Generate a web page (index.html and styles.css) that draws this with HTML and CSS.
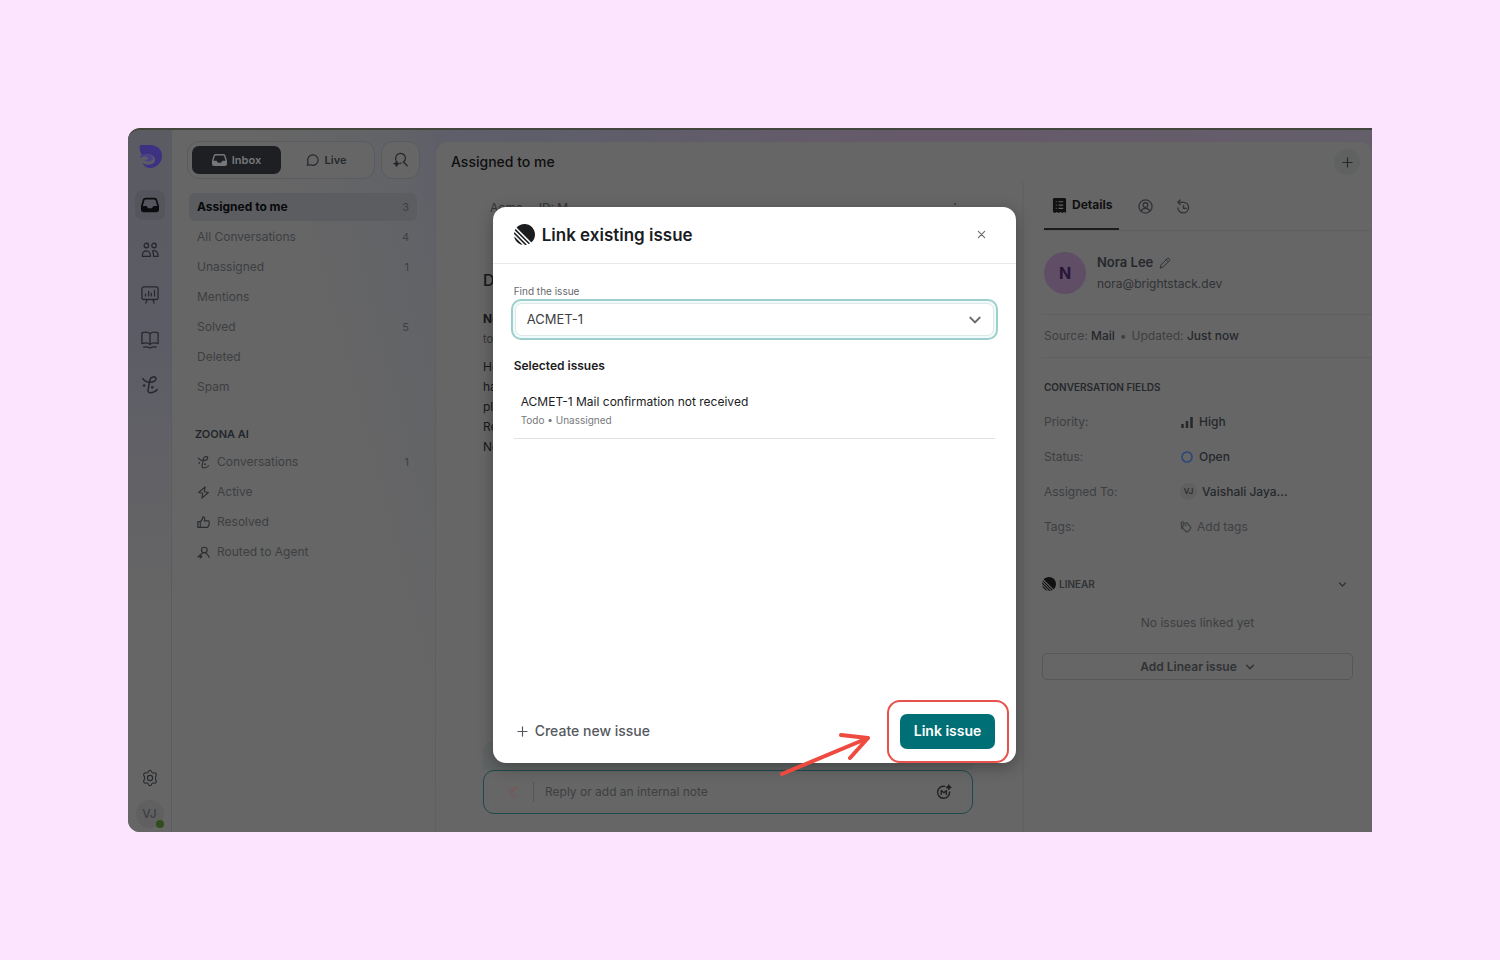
FILE: index.html
```html
<!DOCTYPE html>
<html lang="en">
<head>
    <meta charset="UTF-8">
    <meta name="viewport" content="width=device-width, initial-scale=1.0">
    <title>Link existing issue</title>
    <link rel="stylesheet" href="styles.css">
</head>
<body>
    <!-- shared icon shapes -->
    <svg class="sprite" aria-hidden="true">
        <symbol id="i-inbox" viewBox="0 0 20 16">
            <path fill="currentColor" fill-rule="evenodd" d="M5 0h10c1.500 0 2.500.8 2.900 2L20 9v4c0 2-1 3-3 3H3c-2 0-3-1-3-3V9l2.100-7C2.500.8 3.500 0 5 0zM5 2c-.6 0-1 .3-1.200.9L2 9h4l2 2.500h4L14 9h4l-1.800-6.100C16 2.300 15.600 2 15 2z"/>
        </symbol>
        <symbol id="i-zoona" viewBox="0 0 20 20">
            <g fill="none" stroke="currentColor" stroke-width="1.700" stroke-linecap="round" stroke-linejoin="round">
                <path d="M2 3c2 3 5 4 8 4 4 0 7-2 6.500-4.500S11 .5 10 4L8 14.500c-.5 2.500 0 4 2 4 3 0 6-1 8-3.500"/>
            </g>
            <circle cx="3.500" cy="10.500" r="1.400" fill="currentColor"/>
            <circle cx="12.500" cy="12.500" r="1.400" fill="currentColor"/>
        </symbol>
        <symbol id="i-linear" viewBox="0 0 100 100">
            <path fill="currentColor" d="M1.200 61.500c-.2-1 1-1.600 1.700-.9l36.500 36.500c.7.700.1 1.900-.9 1.700C20 94.400 5.600 80 1.200 61.500zM0 46.900c0 .3.100.5.300.700l52.100 52.100c.2.200.4.300.7.300 2.400-.1 4.700-.5 7-1 .8-.2 1-1.100.5-1.700L2.600 39.400c-.6-.6-1.500-.3-1.700.5-.5 2.300-.8 4.600-.9 7zM4.200 29.700c-.2.400-.1.800.2 1.100l64.800 64.800c.3.300.7.400 1.100.2 1.800-.8 3.500-1.700 5.200-2.700.5-.3.600-1.100.2-1.600L8.400 24.300c-.4-.4-1.200-.3-1.600.2-1 1.700-1.900 3.400-2.600 5.200zM12.700 18.100c-.4-.4-.4-1 0-1.400C21.800 6.400 35.100 0 50 0c27.600 0 50 22.400 50 50 0 14.900-6.500 28.200-16.700 37.400-.4.400-1 .3-1.400 0z"/>
        </symbol>
        <symbol id="i-plus" viewBox="0 0 12 12">
            <path d="M6 1v10M1 6h10" fill="none" stroke="currentColor" stroke-width="1.300" stroke-linecap="round"/>
        </symbol>
        <symbol id="i-down" viewBox="0 0 12 12">
            <path d="M2 4l4 4 4-4" fill="none" stroke="currentColor" stroke-width="1.700" stroke-linecap="round" stroke-linejoin="round"/>
        </symbol>
    </svg>

    <div class="app">
        <nav class="rail" aria-label="Main">
            <svg class="logo" viewBox="0 0 28 28">
                <path fill="#3d3182" d="M4 3h10c7 0 12 4 12 11 0 6-5 12-12 12-3 0-6-2-8-5 5 3 12 2 13-2 1-5-5-8-13-6C4 10 3 7 4 3z"/>
                <path fill="#4b3f8d" d="M4 14c5-3 14-1 13 3-1 3-6 3-9 1 3 0 5-1 4-2-1-2-5-2-8 0z"/>
            </svg>
            <a href="#" class="rail-link current" aria-label="Inbox"><svg><use href="#i-inbox"/></svg></a>
            <a href="#" class="rail-link" aria-label="Contacts">
                <svg viewBox="0 0 20 18" class="line"><circle cx="6" cy="4" r="2.500"/><circle cx="14.500" cy="4" r="2.500"/><path d="M1.500 16c0-8 9-8 9 0zM13 10c4-1 6 2 6 6h-5c0-3-1-5-1-6z"/></svg>
            </a>
            <a href="#" class="rail-link" aria-label="Reports">
                <svg viewBox="0 0 20 20" class="line"><rect x="1" y="1" width="18" height="14" rx="2"/><path d="M6.500 15.500L5.500 19M13.500 15.500l1 3.500M5 11V9M8.500 11V6M11.500 11V8M15 11V5"/></svg>
            </a>
            <a href="#" class="rail-link" aria-label="Knowledge base">
                <svg viewBox="0 0 20 20" class="line"><path d="M10 3v12M10 3C8 1 4 1 1 2v12c3-1 7-1 9 1 2-2 6-2 9-1V2c-3-1-7-1-9 1M3 18c3-1 4-1 7 1 3-2 4-2 7-1"/></svg>
            </a>
            <a href="#" class="rail-link" aria-label="Zoona AI"><svg><use href="#i-zoona"/></svg></a>
            <a href="#" class="rail-link settings" aria-label="Settings">
                <svg viewBox="0 0 24 24" class="line"><circle cx="12" cy="12" r="3.500"/><path d="M10 3.500C10.500 1 13.500 1 14 3.500c.5 1.500 1.500 2 3 1.700 2.500-.7 4.500 2 3 4-1 1.300-1 4.300 0 5.600 1.500 2-.5 4.700-3 4-1.500-.3-2.500.2-3 1.700-.5 2.500-3.500 2.500-4 0-.5-1.500-1.500-2-3-1.700-2.500.7-4.500-2-3-4 1-1.300 1-4.300 0-5.600-1.500-2 .5-4.700 3-4 1.500.3 2.500-.2 3-1.700z"/></svg>
            </a>
            <div class="me">VJ<span class="online"></span></div>
        </nav>

        <aside class="sidebar">
            <div class="tools">
                <div class="switch">
                    <button class="switch-btn active"><svg><use href="#i-inbox"/></svg>Inbox</button>
                    <button class="switch-btn"><svg viewBox="0 0 16 16" class="line"><path d="M2 14l1-3.500A6 6 0 1 1 6 13.500z"/></svg>Live</button>
                </div>
                <button class="search" aria-label="Search">
                    <svg viewBox="0 0 18 18" class="line"><path d="M3 9V7a5.500 5.500 0 1 1 8.500 4.600M12 11.500L16 15.500M8 12.700h1"/><path fill="currentColor" d="M4 10l1 2.500L7 13l-2 1-1 2-1-2-2-1 2-.5z"/></svg>
                </button>
            </div>
            <ul class="folders">
                <li><a href="#" class="folder selected">Assigned to me<span>3</span></a></li>
                <li><a href="#" class="folder">All Conversations<span>4</span></a></li>
                <li><a href="#" class="folder">Unassigned<span>1</span></a></li>
                <li><a href="#" class="folder">Mentions</a></li>
                <li><a href="#" class="folder">Solved<span>5</span></a></li>
                <li><a href="#" class="folder">Deleted</a></li>
                <li><a href="#" class="folder">Spam</a></li>
            </ul>
            <h2 class="group-title">ZOONA AI</h2>
            <ul class="folders">
                <li><a href="#" class="folder"><svg><use href="#i-zoona"/></svg>Conversations<span>1</span></a></li>
                <li><a href="#" class="folder"><svg viewBox="0 0 16 16" class="line"><path d="M10 1L2 8l5 1-1 6 8-7-5-1z"/></svg>Active</a></li>
                <li><a href="#" class="folder"><svg viewBox="0 0 16 16" class="line"><path d="M1 7h3v7H1zM4 7c2-1 3-3 3-6 3 0 3 2 2 5h5c2 0 1 8-2 8H4"/></svg>Resolved</a></li>
                <li><a href="#" class="folder"><svg viewBox="0 0 16 16" class="line"><circle cx="9" cy="5" r="3.500"/><path d="M11 9c2 1 3 2 4 5M7 9c-2 1-3 1-4 3M1 13h5M4 11l2 2-2 2"/></svg>Routed to Agent</a></li>
            </ul>
        </aside>

        <main class="main">
            <header class="main-head">
                <h1>Assigned to me</h1>
                <button class="add" aria-label="New conversation"><svg><use href="#i-plus"/></svg></button>
            </header>
            <div class="columns">
                <section class="thread">
                    <div class="thread-meta"><span>Acme</span><span>ID: M</span><span class="more">⋮</span></div>
                    <h2 class="subject">De</h2>
                    <p class="from">Nora</p>
                    <p class="to">to me</p>
                    <p class="message">Hey,<br>have<br>pls<br>Re:<br>Nora</p>
                    <div class="composer">
                        <div class="composer-note"></div>
                        <div class="reply">
                            <svg class="reply-ai"><use href="#i-zoona"/></svg>
                            <input type="text" aria-label="Reply" placeholder="Reply or add an internal note">
                            <svg class="macro" viewBox="0 0 20 20">
                                <path d="M11 3a7.500 7.500 0 1 0 6 7M6.500 13V8L10 11l3-3v5" fill="none" stroke="currentColor" stroke-width="1.700" stroke-linecap="round" stroke-linejoin="round"/>
                                <path d="M16 0l1.500 2.500L20 4l-2.500 1.500L16 8l-1.500-2.500L12 4l2.500-1.500z" fill="currentColor"/>
                            </svg>
                        </div>
                    </div>
                </section>

                <aside class="details">
                    <div class="tabs">
                        <button class="tab active">
                            <svg viewBox="0 0 14 16"><path fill="#111" d="M1 0h12l1 1v15l-2-1-2 1-2-1-2 1-2-1-2 1-2-1V1z"/><path d="M3 4h1M6 4h5M3 7.500h1M6 7.500h5M3 11h1M6 11h5" stroke="#666" stroke-width="1.300"/></svg>Details
                        </button>
                        <button class="tab" aria-label="Contact"><svg viewBox="0 0 16 16" class="line"><circle cx="8" cy="8" r="7"/><circle cx="8" cy="6.500" r="2.500"/><path d="M3.500 13c1-4 8-4 9 0"/></svg></button>
                        <button class="tab" aria-label="History"><svg viewBox="0 0 16 16" class="line"><path d="M2 3.500h6.500a5.700 5.700 0 1 1-6.500 6M4.500 1L2 3.500 4.500 6M8 7v3h3"/></svg></button>
                    </div>
                    <div class="contact">
                        <div class="avatar">N</div>
                        <div>
                            <div class="name">Nora Lee <svg viewBox="0 0 14 14" class="line"><path d="M1.500 12.500l1-3.500 7-7c1.500-1.500 4 .5 2.500 2.500l-7 7zM8.500 3l2.500 2.500"/></svg></div>
                            <div class="email">nora@brightstack.dev</div>
                        </div>
                    </div>
                    <p class="source">Source: <b>Mail</b><i>•</i>Updated: <b>Just now</b></p>
                    <h3 class="fields-title">CONVERSATION FIELDS</h3>
                    <dl class="fields">
                        <dt>Priority:</dt>
                        <dd><svg viewBox="0 0 14 14"><path d="M2.500 13V9M7 13V6M11.500 13V2" stroke="currentColor" stroke-width="2.500"/></svg>High</dd>
                        <dt>Status:</dt>
                        <dd><svg viewBox="0 0 14 14"><circle cx="7" cy="7" r="5" fill="none" stroke="#2d467b" stroke-width="1.700"/></svg>Open</dd>
                        <dt>Assigned To:</dt>
                        <dd><span class="mini">VJ</span>Vaishali Jaya...</dd>
                        <dt>Tags:</dt>
                        <dd class="muted"><svg viewBox="0 0 14 14" class="line"><path d="M4 3l4-1 4 4.500c1 1 1 2 0 3L9.500 12c-1 1-2 1-3 0L3 8zM2 9L1.500 4C1 2 2 1 4 1"/><circle cx="6.500" cy="5" r=".5"/></svg>Add tags</dd>
                    </dl>
                    <section class="linear">
                        <h3 class="linear-head"><svg class="linear-mark"><use href="#i-linear"/></svg>LINEAR<svg class="chevron"><use href="#i-down"/></svg></h3>
                        <p>No issues linked yet</p>
                        <button class="add-linear">Add Linear issue<svg><use href="#i-down"/></svg></button>
                    </section>
                </aside>
            </div>
        </main>

        <div class="overlay">
            <div class="modal" role="dialog" aria-labelledby="modal-title">
                <header class="modal-head">
                    <svg class="modal-logo"><use href="#i-linear"/></svg>
                    <h2 id="modal-title">Link existing issue</h2>
                    <button class="close" aria-label="Close"><svg viewBox="0 0 10 10"><path d="M1.500 1.500l7 7M8.500 1.500l-7 7" stroke="currentColor" stroke-width="1.200" stroke-linecap="round"/></svg></button>
                </header>
                <div class="modal-body">
                    <label for="issue">Find the issue</label>
                    <div class="select">
                        <select id="issue"><option>ACMET-1</option></select>
                        <svg><use href="#i-down"/></svg>
                    </div>
                    <h3>Selected issues</h3>
                    <div class="issue">
                        <div class="issue-name">ACMET-1 Mail confirmation not received</div>
                        <div class="issue-state">Todo • Unassigned</div>
                    </div>
                </div>
                <footer class="modal-foot">
                    <button class="create"><svg><use href="#i-plus"/></svg>Create new issue</button>
                    <button class="link-issue">Link issue<span class="highlight"></span></button>
                </footer>
                <svg class="arrow" viewBox="0 0 92 46"><path d="M3 42L89 6M62 3l27 3-18 20" fill="none" stroke="#ee4a40" stroke-width="4" stroke-linecap="round" stroke-linejoin="round"/></svg>
            </div>
        </div>
    </div>
</body>
</html>
```

FILE: styles.css
```css
:root {
    --dim: #666666;
    --line: #5f5f60;
    --ink: #17181a;
    --text: #25282c;
    --muted: #3d3f42;
    --teal: #007076;
    --red: #e8524c;
}

* {
    box-sizing: border-box;
}

body {
    margin: 0;
    min-height: 100vh;
    padding: 128px;
    display: flex;
    background: #fce4ff;
    font-family: Inter, "Noto Sans", sans-serif;
    font-size: 12px;
    line-height: 20px;
    color: var(--text);
}

h1, h2, h3, p, ul, dl, dd {
    margin: 0;
    padding: 0;
}

ul {
    list-style: none;
}

a {
    color: inherit;
    text-decoration: none;
}

button, input, select {
    font: inherit;
    color: inherit;
    background: none;
    border: 0;
    padding: 0;
}

svg {
    flex: none;
}

.sprite {
    position: absolute;
    width: 0;
    height: 0;
}

.line {
    fill: none;
    stroke: currentColor;
    stroke-width: 1.4;
    stroke-linecap: round;
    stroke-linejoin: round;
}

.app {
    position: relative;
    flex: 1;
    display: grid;
    grid-template-columns: 44px 263px 1fr;
    border-top: 2px solid #42463c;
    border-radius: 12px 0 0 12px;
    background: linear-gradient(100deg, #616166 0%, #5e5e6b 30%, #66596a 60%, #63606a 100%);
    overflow: hidden;
}

/* left icon rail */
.rail {
    display: flex;
    flex-direction: column;
    align-items: center;
    gap: 15px;
    padding: 12px 0 4px;
    border-right: 1px solid #5c5c60;
    background: linear-gradient(#5b5b63 0%, #5c5c66 30%, #626266 50%, var(--dim) 70%);
}

.logo {
    width: 28px;
    height: 28px;
    margin-bottom: 5px;
}

.rail-link {
    width: 30px;
    height: 30px;
    display: grid;
    place-items: center;
    border-radius: 8px;
}

.rail-link svg {
    width: 18px;
    height: 18px;
}

.rail-link.current {
    background: #55565d;
    color: #0b0c0e;
}

.settings {
    margin-top: auto;
}

.me {
    position: relative;
    width: 28px;
    height: 28px;
    margin-top: -8px;
    border-radius: 50%;
    background: #606060;
    color: var(--muted);
    font-weight: 500;
    line-height: 28px;
    text-align: center;
}

.online {
    position: absolute;
    right: 0;
    bottom: 0;
    width: 8px;
    height: 8px;
    border-radius: 50%;
    background: #2f4e1c;
}

/* folder list */
.sidebar {
    padding: 11px 15px;
    background: linear-gradient(75deg, var(--dim) 0%, var(--dim) 60%, #626367 90%, #5f5f69 100%);
}

.tools {
    display: flex;
    gap: 6px;
    margin-bottom: 14px;
}

.switch {
    flex: 1;
    display: flex;
    padding: 4px;
    border: 1px solid #5a5b60;
    border-radius: 12px;
    background: var(--dim);
}

.switch-btn {
    flex: 1;
    display: flex;
    align-items: center;
    justify-content: center;
    gap: 5px;
    height: 28px;
    border-radius: 7px;
    font-size: 11px;
    font-weight: 600;
}

.switch-btn svg {
    width: 15px;
    height: 14px;
}

.switch-btn.active {
    background: #1d1f23;
    color: #777779;
}

.search {
    width: 39px;
    display: grid;
    place-items: center;
    border: 1px solid #5a5b60;
    border-radius: 12px;
    background: var(--dim);
}

.search svg {
    width: 16px;
    height: 16px;
}

.folders {
    display: grid;
    gap: 2px;
    padding: 0 3px 0 2px;
}

.folder {
    display: flex;
    align-items: center;
    gap: 7px;
    height: 28px;
    padding: 0 8px;
    border-radius: 6px;
    color: var(--muted);
}

.folder svg {
    width: 13px;
    height: 13px;
    color: #2b2d30;
}

.folder span {
    margin-left: auto;
    font-size: 11px;
}

.folder.selected {
    background: #5b5d60;
    color: #08090a;
    font-weight: 700;
}

.folder.selected span {
    color: var(--muted);
    font-weight: 400;
}

.group-title {
    padding: 23px 8px 4px;
    font-size: 11px;
    font-weight: 600;
    color: #22262c;
}

/* conversation panel */
.main {
    display: flex;
    flex-direction: column;
    margin-top: 12px;
    border-left: 1px solid var(--line);
    border-radius: 12px 12px 0 0;
    background: var(--dim);
}

.main-head {
    display: flex;
    align-items: center;
    justify-content: space-between;
    height: 40px;
    padding: 0 12px 0 15px;
}

.main-head h1 {
    font-size: 14px;
    font-weight: 500;
    color: #0e0f10;
}

.add {
    width: 26px;
    height: 26px;
    display: grid;
    place-items: center;
    border-radius: 50%;
    background: #606262;
}

.add svg {
    width: 11px;
    height: 11px;
}

.columns {
    flex: 1;
    display: grid;
    grid-template-columns: 1fr 350px;
}

.thread {
    display: flex;
    flex-direction: column;
    padding: 16px 49px 18px 47px;
    color: var(--ink);
}

.thread-meta {
    display: flex;
    gap: 16px;
    padding: 0 12px 0 7px;
    color: #333538;
}

.more {
    margin-left: auto;
}

.subject {
    margin-top: 52px;
    font-size: 16px;
    font-weight: 500;
}

.from {
    margin-top: 19px;
    font-weight: 700;
}

.to {
    font-size: 11px;
    color: #333538;
}

.message {
    margin-top: 8px;
}

.composer {
    margin-top: auto;
}

.composer-note {
    height: 29px;
    border-radius: 12px 12px 0 0;
    background: #606363;
}

.reply {
    display: flex;
    align-items: center;
    height: 44px;
    padding: 0 20px 0 23px;
    border: 1px solid #1f4a4d;
    border-radius: 11px;
}

.reply-ai {
    width: 12px;
    height: 12px;
    margin-right: 14px;
    color: #765858;
}

.reply input {
    flex: 1;
    min-width: 0;
    padding-left: 11px;
    border-left: 1px solid #565658;
}

.reply input::placeholder {
    color: var(--muted);
    opacity: 1;
}

.macro {
    width: 16px;
    height: 16px;
    color: #202124;
}

/* details panel */
.details {
    border-left: 2px solid #626263;
    padding-left: 18px;
}

.tabs {
    display: flex;
    align-items: flex-start;
    gap: 15px;
    padding-left: 2px;
    border-bottom: 1px solid var(--line);
}

.tab {
    display: flex;
    align-items: center;
    gap: 5px;
    height: 48px;
    padding: 0 4px;
    color: #303235;
}

.tab svg {
    width: 15px;
    height: 15px;
}

.tab.active {
    padding: 0 7px 0 8px;
    border-bottom: 2px solid #1b1c1e;
    color: #0f1012;
    font-weight: 700;
}

.contact {
    display: flex;
    align-items: center;
    gap: 11px;
    height: 84px;
    padding-left: 2px;
    border-bottom: 1px solid var(--line);
}

.avatar {
    width: 42px;
    height: 42px;
    border-radius: 50%;
    background: #604d66;
    color: #2a1538;
    font-size: 16px;
    font-weight: 700;
    line-height: 42px;
    text-align: center;
}

.name {
    font-size: 13px;
    font-weight: 600;
    line-height: 22px;
}

.name svg {
    width: 12px;
    height: 12px;
    margin-left: 2px;
    vertical-align: middle;
    stroke-width: 1;
}

.email {
    line-height: 22px;
    color: #303235;
}

.source {
    padding: 11px 2px;
    border-bottom: 1px solid var(--line);
    color: var(--muted);
}

.source b {
    font-weight: 500;
    color: var(--text);
}

.source i {
    padding: 0 5px;
    font-style: normal;
}

.fields-title {
    padding: 19px 2px 7px;
    font-size: 10px;
    font-weight: 600;
}

.fields {
    display: grid;
    grid-template-columns: 136px 1fr;
    padding: 0 2px;
    line-height: 35px;
}

.fields dt {
    color: var(--muted);
}

.fields dd {
    display: flex;
    align-items: center;
    gap: 5px;
    font-weight: 500;
}

.fields dd svg {
    width: 14px;
    height: 14px;
}

.fields .muted {
    font-weight: 400;
    color: var(--muted);
}

.fields .muted svg {
    width: 12px;
    height: 12px;
}

.mini {
    width: 17px;
    height: 17px;
    border-radius: 50%;
    background: #606060;
    font-size: 8px;
    line-height: 17px;
    text-align: center;
}

.linear {
    padding: 30px 19px 0 0;
    color: #303235;
}

.linear p {
    padding: 19px 0 20px;
    text-align: center;
    color: var(--muted);
}

.linear-head {
    display: flex;
    align-items: center;
    gap: 3px;
    font-size: 10px;
    font-weight: 600;
}

.linear-mark {
    width: 14px;
    height: 14px;
    color: #111;
}

.chevron {
    width: 9px;
    height: 9px;
    margin: 0 6px 0 auto;
}

.add-linear {
    display: flex;
    align-items: center;
    justify-content: center;
    gap: 8px;
    width: 100%;
    height: 27px;
    border: 1px solid #56575a;
    border-radius: 5px;
    font-weight: 600;
}

.add-linear svg {
    width: 10px;
    height: 10px;
}

/* dialog over the page */
.overlay {
    position: absolute;
    inset: 0;
    display: grid;
    place-items: center;
    padding: 7px 0 0 9px;
}

.modal {
    position: relative;
    display: flex;
    flex-direction: column;
    width: 42.4%;
    min-height: 80%;
    border-radius: 13px;
    background: #fff;
    box-shadow: 0 4px 16px rgba(0, 0, 0, 0.3);
}

.modal-head {
    display: flex;
    align-items: center;
    gap: 7px;
    height: 57px;
    padding: 0 27px 0 21px;
    border-bottom: 1px solid #e9eaeb;
    color: #1b1c1e;
}

.modal-logo {
    width: 21px;
    height: 21px;
}

.modal-head h2 {
    font-size: 17px;
    font-weight: 600;
}

.close {
    display: grid;
    place-items: center;
    width: 16px;
    height: 16px;
    margin-left: auto;
    color: #66686b;
}

.close svg {
    width: 9px;
    height: 9px;
}

.modal-body {
    flex: 1;
    padding: 20px 18px;
    color: #1b1c1e;
}

.modal-body label {
    display: block;
    padding-left: 3px;
    font-size: 10px;
    line-height: 15px;
    color: #66696c;
}

.select {
    position: relative;
    height: 41px;
    padding: 2px;
    border: 2px solid #9ecfcc;
    border-radius: 10px;
    background: #effafa;
}

.select select {
    appearance: none;
    width: 100%;
    height: 100%;
    padding: 0 11px;
    border: 1px solid #dfe7e8;
    border-radius: 7px;
    background: #fff;
    font-size: 13px;
    color: #3e4043;
}

.select svg {
    position: absolute;
    top: 12px;
    right: 14px;
    width: 14px;
    height: 14px;
    color: #66696c;
}

.modal-body h3 {
    padding: 16px 3px 8px;
    font-size: 12px;
    font-weight: 600;
}

.issue {
    margin: 0 3px;
    padding: 9px 7px 9px;
    border-bottom: 1px solid #dfe0e1;
}

.issue-name {
    line-height: 18px;
}

.issue-state {
    font-size: 10px;
    line-height: 18px;
    color: #77797c;
}

.modal-foot {
    display: flex;
    align-items: center;
    justify-content: space-between;
    padding: 0 21px 14px 24px;
    font-size: 14px;
}

.create {
    display: flex;
    align-items: center;
    gap: 7px;
    color: #55595e;
    font-weight: 500;
}

.create svg {
    width: 11px;
    height: 11px;
}

.link-issue {
    position: relative;
    height: 35px;
    padding: 0 14px;
    border-radius: 7px;
    background: var(--teal);
    color: #fff;
    font-weight: 600;
}

.highlight {
    position: absolute;
    inset: -14px -14px -14px -13px;
    border: 2px solid var(--red);
    border-radius: 13px;
}

.arrow {
    position: absolute;
    right: 145px;
    bottom: -15px;
    width: 92px;
    height: 46px;
}
```
